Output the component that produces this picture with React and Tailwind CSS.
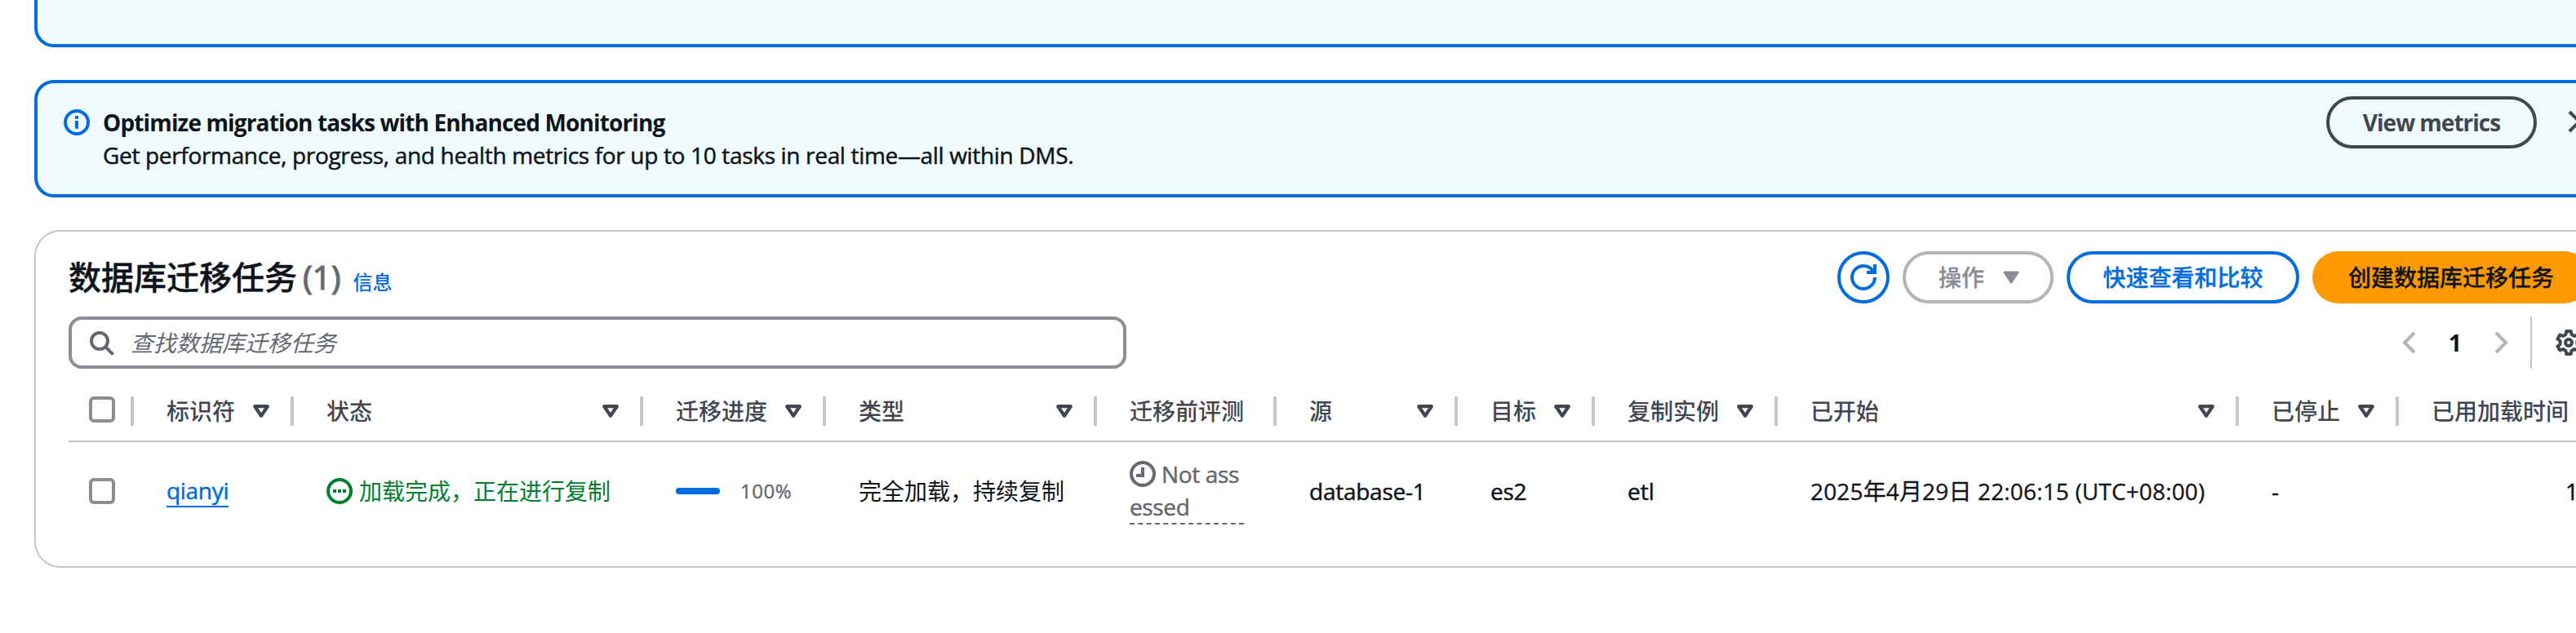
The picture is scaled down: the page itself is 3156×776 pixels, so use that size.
const sans = "font-['Open_Sans','Noto_Sans_CJK_SC',sans-serif]";

function Icon({ className = "", children }) {
  return (
    <svg
      viewBox="0 0 16 16"
      className={`block size-8 shrink-0 fill-none stroke-current ${className}`}
      strokeWidth="2"
      aria-hidden="true"
    >
      {children}
    </svg>
  );
}

function InfoIcon({ className }) {
  return (
    <Icon className={className}>
      <circle cx="8" cy="8" r="7" />
      <path d="M8 11.9V7M8 5.9V4" />
    </Icon>
  );
}

function RefreshIcon({ className }) {
  return (
    <Icon className={className}>
      <path d="M15 8c0 3.87-3.13 7-7 7s-7-3.13-7-7 3.13-7 7-7c2.8 0 5.3 1.65 6.4 4" />
      <path d="M10 5h5V0" />
    </Icon>
  );
}

function SearchIcon({ className }) {
  return (
    <Icon className={className}>
      <circle cx="7" cy="7" r="5" />
      <path d="m10.7 10.7 4.6 4.6" />
    </Icon>
  );
}

function RunningIcon({ className }) {
  return (
    <Icon className={className}>
      <circle cx="8" cy="8" r="7" />
      <path d="M4 8h2M7 8h2M10 8h2" />
    </Icon>
  );
}

function PendingIcon({ className }) {
  return (
    <Icon className={className}>
      <circle cx="8" cy="8" r="7" />
      <path d="M8 4v5H4" />
    </Icon>
  );
}

function GearIcon({ className }) {
  return (
    <Icon className={className}>
      <path
        strokeLinejoin="round"
        d="M6.6 1h2.8l.35 2 1.71.98 1.9-.68 1.4 2.42-1.56 1.3v1.96l1.56 1.3-1.4 2.42-1.9-.68-1.71.98-.35 2H6.6l-.35-2-1.71-.98-1.9.68-1.4-2.42 1.56-1.3V7.02l-1.56-1.3 1.4-2.42 1.9.68L6.25 3Z"
      />
      <circle cx="8" cy="8" r="2" />
    </Icon>
  );
}

function SortCaret() {
  return (
    <svg viewBox="0 0 20 16" className="block h-4 w-5 shrink-0" aria-hidden="true">
      <path
        d="M2.2 2.2h15.6L10 13.7Z"
        className="fill-none stroke-current"
        strokeWidth="4.2"
        strokeLinejoin="round"
      />
    </svg>
  );
}

function Checkbox() {
  return <div className="size-8 rounded-md border-4 border-[#8c8c94] bg-white" />;
}

const columns = [
  { label: "标识符", width: "w-[196px]", sortable: true },
  { label: "状态", width: "w-[428px]", sortable: true },
  { label: "迁移进度", width: "w-[224px]", sortable: true },
  { label: "类型", width: "w-[332px]", sortable: true },
  { label: "迁移前评测", width: "w-[220px]", sortable: false },
  { label: "源", width: "w-[222px]", sortable: true },
  { label: "目标", width: "w-[168px]", sortable: true },
  { label: "复制实例", width: "w-[224px]", sortable: true },
  { label: "已开始", width: "w-[565px]", sortable: true },
  { label: "已停止", width: "w-[196px]", sortable: true },
  { label: "已用加载时间", width: "w-[280px]", sortable: false },
];

function Cell({ width, className = "", children }) {
  return (
    <div className={`flex shrink-0 items-center whitespace-nowrap pl-10 ${width} ${className}`}>
      {children}
    </div>
  );
}

function MonitoringBanner() {
  return (
    <section className="flex h-36 w-[3200px] shrink-0 items-start rounded-[24px] border-4 border-[#006ce0] bg-[#f0fbfd] pt-4 pl-8">
      <InfoIcon className="mt-4 text-[#006ce0]" />
      <div className="ml-4 w-[2724px] pt-3 leading-10">
        <h2 className="font-bold tracking-[-0.86px]">Optimize migration tasks with Enhanced Monitoring</h2>
        <p className="tracking-[-0.33px] [-webkit-text-stroke:0.5px]">
          Get performance, progress, and health metrics for up to 10 tasks in real time—all within DMS.
        </p>
      </div>
      <button className="flex h-16 w-[258px] items-center justify-center rounded-full border-4 border-[#424650] font-bold tracking-[-1px] text-[#424650]">
        View metrics
      </button>
      <Icon className="mt-[15px] ml-9 text-[#424650]">
        <path d="m2 2 12 12M14 2 2 14" />
      </Icon>
    </section>
  );
}

function TasksHeader() {
  return (
    <div className="flex h-16 items-center">
      <h1 className="flex w-[2167px] items-baseline text-[40px] leading-[50px] font-medium [-webkit-text-stroke:0.4px]">
        数据库迁移任务
        <span className="ml-[7px] text-[#656871] [-webkit-text-stroke:1.2px]">(1)</span>
        <a className="ml-[15px] text-2xl font-medium text-[#006ce0] [-webkit-text-stroke:0px]">信息</a>
      </h1>
      <div className="flex shrink-0 gap-4 font-medium [-webkit-text-stroke:0.3px]">
        <button className="flex size-16 items-center justify-center rounded-full border-4 border-[#006ce0] text-[#006ce0]">
          <RefreshIcon />
        </button>
        <button className="flex h-16 w-[185px] items-center rounded-full border-4 border-[#b4b4bb] pl-10 text-[#8c8c94]">
          操作
          <svg viewBox="0 0 20 16" className="ml-[23px] h-4 w-5" aria-hidden="true">
            <path d="M2 2h16l-8 12Z" className="fill-current stroke-current" strokeWidth="3" strokeLinejoin="round" />
          </svg>
        </button>
        <button className="flex h-16 w-[285px] items-center justify-center rounded-full border-4 border-[#006ce0] text-[#006ce0]">
          快速查看和比较
        </button>
        <button className="flex h-16 w-[340px] items-center justify-center rounded-full bg-[#ff9900] text-[#0f141a]">
          创建数据库迁移任务
        </button>
      </div>
    </div>
  );
}

function TasksToolbar() {
  return (
    <div className="mt-4 flex h-16 items-center">
      <div className="flex h-16 w-[1296px] shrink-0 items-center rounded-2xl border-4 border-[#8c8c94] pl-5 text-[#656871] italic">
        <SearchIcon />
        <span className="ml-5">查找数据库迁移任务</span>
      </div>
      <div className="ml-[1556px] flex h-16 shrink-0 items-center">
        <Icon className="text-[#b4b4bb]">
          <path d="m11 2-6 6 6 6" />
        </Icon>
        <span className="w-[80px] text-center font-bold">1</span>
        <Icon className="text-[#b4b4bb]">
          <path d="m5 2 6 6-6 6" />
        </Icon>
        <span className="ml-5 h-16 w-0.5 bg-[#c6c6cd]" />
        <GearIcon className="ml-[29px] text-[#424650]" />
      </div>
    </div>
  );
}

function TasksTable() {
  return (
    <div className="flex flex-col">
      <div className="flex h-[90px] items-start border-b-2 border-[#c6c6cd] pt-[34px] font-medium text-[#424650]">
        <div className="flex h-9 w-20 shrink-0 items-start justify-between border-r-4 border-[#c6c6cd] pl-[25px]">
          <Checkbox />
        </div>
        {columns.map(({ label, width, sortable }) => (
          <Cell key={label} width={width} className="h-9 justify-between border-r-4 border-[#c6c6cd] pr-[26px]">
            <span>{label}</span>
            {sortable && <SortCaret />}
          </Cell>
        ))}
      </div>
      <div className="flex h-[120px] items-center">
        <div className="w-20 shrink-0 pl-[25px]">
          <Checkbox />
        </div>
        <Cell width="w-[196px]">
          <a className="border-b-2 border-[#006ce0] leading-[38px] tracking-[-0.3px] text-[#006ce0] [-webkit-text-stroke:0.5px]">
            qianyi
          </a>
        </Cell>
        <Cell width="w-[428px]" className="gap-2 text-[#00802f]">
          <RunningIcon />
          加载完成，正在进行复制
        </Cell>
        <Cell width="w-[224px]">
          <span className="h-2 w-[54px] rounded-full bg-[#006ce0]" />
          <span className="ml-[25px] text-2xl tracking-[0.5px] text-[#656871] [-webkit-text-stroke:0.4px]">100%</span>
        </Cell>
        <Cell width="w-[332px]">完全加载，持续复制</Cell>
        <Cell width="w-[220px]">
          <div className="flex w-[140px] flex-col border-b-2 border-dashed border-[#656871] leading-10 tracking-[-0.35px] text-[#656871] [-webkit-text-stroke:0.5px]">
            <span className="flex items-center gap-[7px]">
              <PendingIcon />
              Not ass
            </span>
            <span>essed</span>
          </div>
        </Cell>
        <Cell width="w-[222px]" className="tracking-[-0.25px] [-webkit-text-stroke:0.5px]">database-1</Cell>
        <Cell width="w-[168px]" className="tracking-[-0.3px] [-webkit-text-stroke:0.5px]">es2</Cell>
        <Cell width="w-[224px]" className="[-webkit-text-stroke:0.5px]">etl</Cell>
        <Cell width="w-[565px]" className="tracking-[0.15px] [-webkit-text-stroke:0.3px]">
          2025年4月29日 22:06:15 (UTC+08:00)
        </Cell>
        <Cell width="w-[196px]" className="[-webkit-text-stroke:0.5px]">-</Cell>
        <Cell width="w-[280px]" className="pl-[204px] [-webkit-text-stroke:0.5px]">1</Cell>
      </div>
    </div>
  );
}

export default function App() {
  return (
    <main className={`flex h-[776px] w-full flex-col overflow-hidden bg-white pl-[42px] text-[28px] text-[#0f141a] ${sans}`}>
      <section className="h-[58px] w-[3200px] shrink-0 rounded-b-[24px] border-4 border-t-0 border-[#006ce0] bg-[#f0fbfd]" />
      <div className="h-10 shrink-0" />
      <MonitoringBanner />
      <section className="mt-10 h-[414px] w-[3200px] shrink-0 rounded-[32px] border-2 border-[#c6c6cd] pt-6 pl-10">
        <TasksHeader />
        <TasksToolbar />
        <TasksTable />
      </section>
    </main>
  );
}
